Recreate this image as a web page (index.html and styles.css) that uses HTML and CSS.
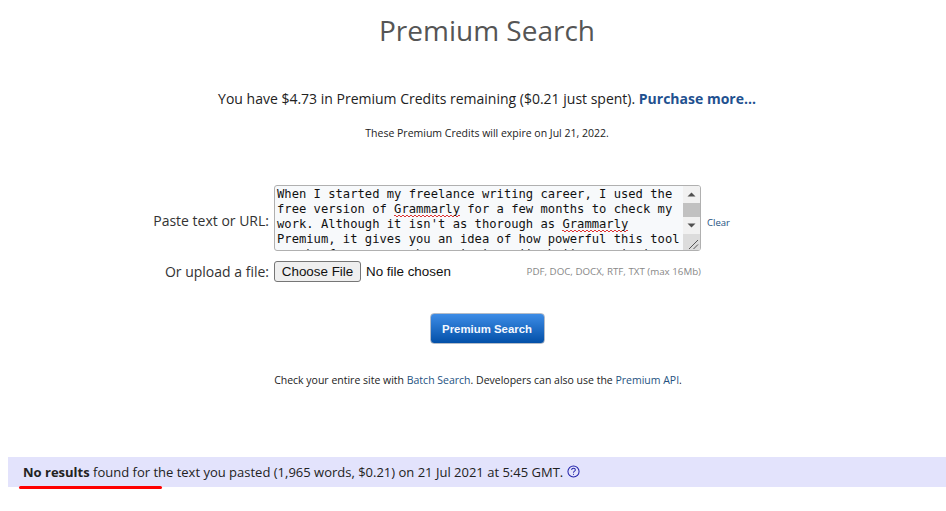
FILE: index.html
```html
<!DOCTYPE html>
<html>
  <head>
    <title>Premium Search</title>
    <meta charset="utf-8" />
    <link rel="stylesheet" href="styles.css">
  </head>
  <body>
    <div class="page">
      <h1>Premium Search</h1>
      <p class="credits">You have $4.73 in Premium Credits remaining ($0.21 just spent). <a href="#" class="buy">Purchase more...</a></p>
      <p class="expire">These Premium Credits will expire on Jul 21, 2022.</p>

      <div class="form">
        <div class="row row-text">
          <label class="lbl">Paste text or URL:</label>
          <div class="textbox">
            <div class="text">When I started my freelance writing career, I used the free version of <u>Grammarly</u> for a few months to check my work. Although it isn't as thorough as <u>Grammarly</u> Premium, it gives you an idea of how powerful this tool can be for anyone who wants to write better content</div>
            <div class="scroll">
              <svg class="arrow" width="17" height="17" viewBox="0 0 17 17"><path d="M4.500 10.500L8.500 6.500L12.500 10.500Z" fill="#505050"/></svg>
              <div class="track"><div class="thumb"></div></div>
              <svg class="arrow" width="17" height="17" viewBox="0 0 17 17"><path d="M4.500 6.500L8.500 10.500L12.500 6.500Z" fill="#505050"/></svg>
              <div class="corner">
                <svg width="17" height="17" viewBox="0 0 17 17"><path d="M6 15L15 6M10.500 15L15 10.500" stroke="#555" stroke-width="1" fill="none"/></svg>
              </div>
            </div>
          </div>
          <a href="#" class="clear">Clear</a>
        </div>
        <div class="row row-file">
          <label class="lbl">Or upload a file:</label>
          <div class="file">
            <button class="choose" type="button">Choose File</button>
            <span class="chosen">No file chosen</span>
            <span class="types">PDF, DOC, DOCX, RTF, TXT (max 16Mb)</span>
          </div>
        </div>
      </div>

      <div class="submit"><button class="btn" type="button">Premium Search</button></div>
      <p class="note">Check your entire site with <a href="#">Batch Search</a>. Developers can also use the <a href="#">Premium API</a>.</p>

      <div class="result"><b class="hit">No results</b> found for the text you pasted (1,965 words, $0.21) on 21 Jul 2021 at 5:45 GMT. <svg class="help" width="13" height="13" viewBox="0 0 14 14"><circle cx="7" cy="7" r="6" fill="none" stroke="#2222aa" stroke-width="1.100"/><path d="M5 5.500C5 4.200 6 3.600 7 3.600C8.100 3.600 9 4.300 9 5.300C9 6.700 7 6.700 7 8.300" fill="none" stroke="#2222aa" stroke-width="1.100"/><rect x="6.500" y="9.500" width="1" height="1.100" fill="#2222aa"/></svg></div>
    </div>
  </body>
</html>
```

FILE: styles.css
```css
html, body {
  margin: 0;
  height: 511px;
  overflow: hidden;
  background: white;
}
body {
  font-family: "Open Sans", sans-serif;
  color: #222;
}
a {
  color: #24527f;
  text-decoration: none;
}
p {
  margin: 0;
  text-align: center;
}
.page {
  width: 958px;
  margin-left: 8px;
}
h1 {
  margin: 0;
  padding-top: 10px;
  font-size: 28px;
  line-height: 40px;
  font-weight: 400;
  text-align: center;
  color: #555;
}
.credits {
  margin-top: 38px;
  font-size: 14px;
  line-height: 22px;
}
.buy {
  font-weight: 700;
  color: #1f5190;
}
.expire {
  margin-top: 15px;
  font-size: 10.500px;
  line-height: 16px;
}
.form {
  margin-top: 44px;
}
.row {
  display: flex;
  align-items: center;
}
.lbl {
  width: 261px;
  margin-right: 5px;
  text-align: right;
  font-size: 14px;
  color: #333;
}
.row-text .lbl {
  padding-top: 5px;
}
.textbox {
  display: flex;
  width: 425px;
  height: 64px;
  border: 1px solid #b0b0b0;
  border-radius: 3px;
  background: #f7f9fb;
  overflow: hidden;
}
.text {
  flex: 1;
  padding: 1px 0 0 2px;
  font-family: "DejaVu Sans Mono", monospace;
  font-size: 12.170px;
  line-height: 15px;
  color: #111;
  overflow: hidden;
}
.text u {
  text-decoration: none;
  padding-bottom: 1px;
  background:
    linear-gradient(45deg, transparent 35%, #d33 35% 65%, transparent 65%) 0 100% / 2px 2px repeat-x,
    linear-gradient(135deg, transparent 35%, #d33 35% 65%, transparent 65%) 2px 100% / 2px 2px repeat-x;
  background-size: 4px 2px, 4px 2px;
}
.scroll {
  display: flex;
  flex-direction: column;
  width: 17px;
  background: #f1f1f1;
}
.arrow {
  display: block;
  flex: none;
}
.thumb {
  height: 14px;
  background: #c1c1c1;
}
.corner {
  height: 17px;
  margin-top: auto;
  background: #dcdcdc;
}
.corner svg {
  display: block;
}
.clear {
  margin: 8px 0 0 6px;
  font-size: 9.500px;
}
.row-file {
  margin-top: 10px;
}
.file {
  display: flex;
  align-items: center;
  width: 427px;
}
.choose {
  width: 87px;
  height: 21px;
  padding: 0;
  border: 1px solid #767676;
  border-radius: 3px;
  background: #efefef;
  font-family: "Liberation Sans", sans-serif;
  font-size: 13.400px;
  color: #111;
}
.chosen {
  margin-left: 5px;
  font-family: "Liberation Sans", sans-serif;
  font-size: 13.400px;
  color: #111;
}
.types {
  margin-left: auto;
  font-size: 9.750px;
  color: #888;
}
.submit {
  margin-top: 31px;
  text-align: center;
}
.btn {
  width: 115px;
  height: 31px;
  padding: 0;
  border: 1px solid #b4bcc8;
  border-radius: 4px;
  background: linear-gradient(#3d8ce6, #0350a8);
  font-family: "Liberation Sans", sans-serif;
  font-size: 11.400px;
  font-weight: 700;
  color: #f4f8ff;
}
.note {
  margin-top: 28px;
  margin-right: 18px;
  font-size: 10.500px;
  line-height: 16px;
}
.result {
  margin-top: 69px;
  height: 30px;
  padding-left: 15px;
  background: #e3e3fc;
  font-size: 13px;
  line-height: 30px;
  color: #222;
}
.hit {
  position: relative;
}
.hit::after {
  content: "";
  position: absolute;
  left: -4px;
  top: 23px;
  width: 143px;
  height: 3px;
  border-radius: 2px;
  background: #f00;
}
.help {
  vertical-align: -1px;
}
```
